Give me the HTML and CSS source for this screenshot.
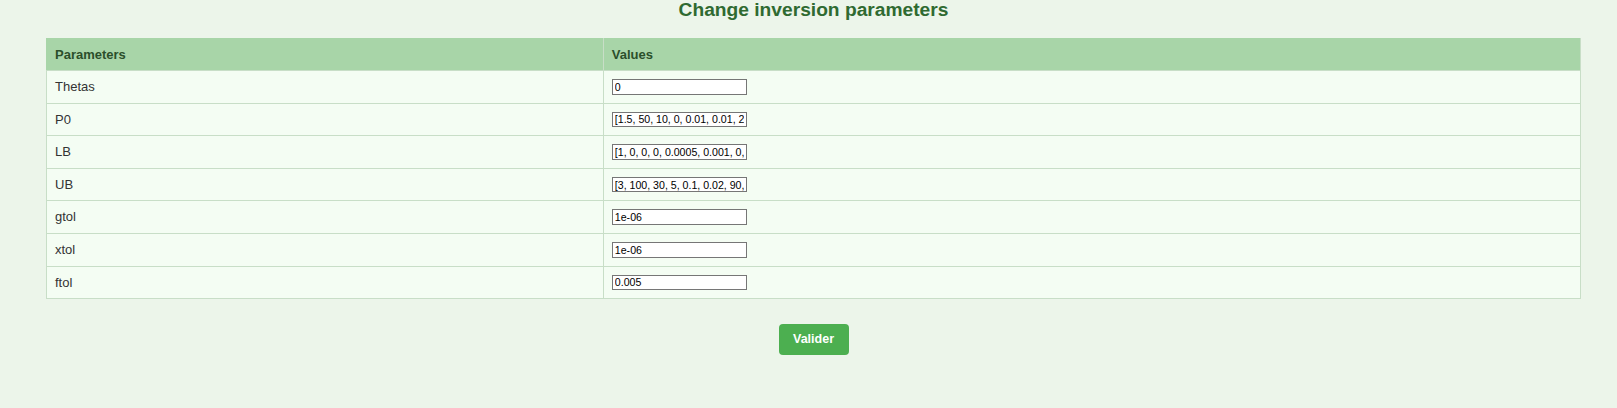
FILE: index.html
```html
<!DOCTYPE html>
<html lang="en">
<head>
<meta charset="utf-8">
<title>Change inversion parameters</title>
<link rel="stylesheet" href="styles.css">
</head>
<body>
<div class="page">
  <h2 class="title">Change inversion parameters</h2>
  <form class="form">
    <table class="params">
      <thead>
        <tr><th class="col-name">Parameters</th><th>Values</th></tr>
      </thead>
      <tbody>
        <tr><td>Thetas</td><td><input class="field" type="text" value="0"></td></tr>
        <tr><td>P0</td><td><input class="field" type="text" value="[1.5, 50, 10, 0, 0.01, 0.01, 20]"></td></tr>
        <tr><td>LB</td><td><input class="field" type="text" value="[1, 0, 0, 0, 0.0005, 0.001, 0, 0]"></td></tr>
        <tr><td>UB</td><td><input class="field" type="text" value="[3, 100, 30, 5, 0.1, 0.02, 90, 1]"></td></tr>
        <tr><td>gtol</td><td><input class="field" type="text" value="1e-06"></td></tr>
        <tr><td>xtol</td><td><input class="field" type="text" value="1e-06"></td></tr>
        <tr><td>ftol</td><td><input class="field" type="text" value="0.005"></td></tr>
      </tbody>
    </table>
    <div class="actions">
      <button class="btn" type="button">Valider</button>
    </div>
  </form>
</div>
</body>
</html>
```
FILE: styles.css
```css
html, body {
  margin: 0;
  padding: 0;
  background: #ecf5ea;
}
body {
  font-family: "Liberation Sans", Arial, sans-serif;
  font-size: 13px;
  color: #333;
}
.page {
  padding: 0 36px 0 46px;
}
.title {
  margin: 0 0 18px 0;
  font-size: 19.2px;
  line-height: 20px;
  font-weight: bold;
  color: #2f6a31;
  text-align: center;
}
.form {
  margin: 0;
}
.params {
  width: 100%;
  border-collapse: collapse;
  background: #f4fdf3;
  border: 1px solid #c8dec7;
}
.params th {
  background: #a8d5a8;
  color: #2b4f2b;
  font-weight: bold;
  text-align: left;
  padding: 8px;
  line-height: 15px;
  border: 1px solid #c8dec7;
  border-top-color: #a8d5a8;
  border-left-color: #a8d5a8;
}
.params th + th {
  border-left-color: #c8dec7;
}
.params .col-name {
  width: 36.3%;
}
.params td {
  padding: 8px;
  line-height: 15.6px;
  border: 1px solid #c8dec7;
  vertical-align: middle;
}
.field {
  display: block;
  box-sizing: border-box;
  width: 135px;
  height: 15.6px;
  margin: 0;
  padding: 0 2px;
  border: 1px solid #767676;
  background: #fff;
  font-family: "Liberation Sans", Arial, sans-serif;
  font-size: 10.6px;
  line-height: 13px;
  color: #000;
}
.actions {
  display: flex;
  justify-content: center;
  margin-top: 25px;
}
.btn {
  background: #4caf50;
  color: #fff;
  border: none;
  border-radius: 4px;
  padding: 8px 12px;
  height: 31px;
  width: 70px;
  font-family: "Liberation Sans", Arial, sans-serif;
  font-size: 12.5px;
  font-weight: bold;
  line-height: 15px;
  cursor: pointer;
}
```
